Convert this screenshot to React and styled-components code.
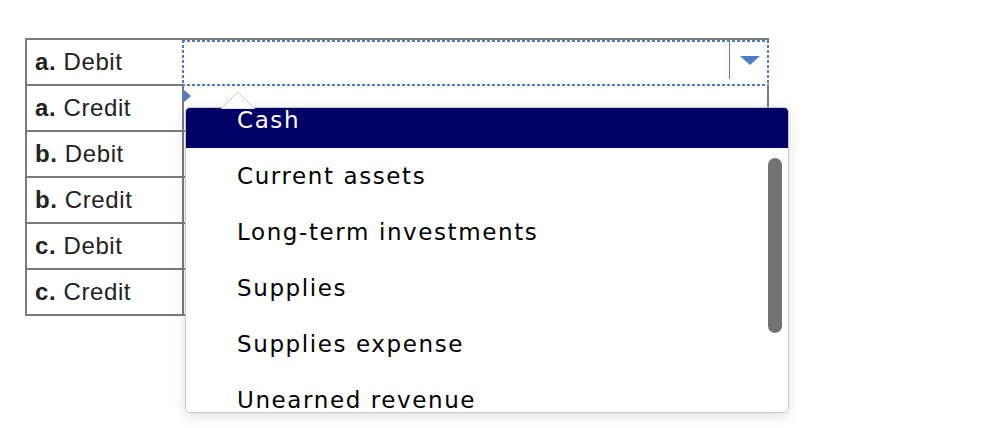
import { useLayoutEffect, useRef } from 'react';
import styled, { createGlobalStyle } from 'styled-components';

const GlobalStyle = createGlobalStyle`
  html, body {
    margin: 0;
    padding: 0;
    background: #fff;
  }
`;

const FOCUS = '#4f7ec4';

const Page = styled.div`
  box-sizing: border-box;
  min-height: 428px;
  padding: 38px 0 0 25px;
`;

const Table = styled.div`
  display: grid;
  grid-template-columns: 155px 583px;
  grid-auto-rows: 44px;
  gap: 2px;
  padding: 2px;
  width: max-content;
  background: #7b7b7b;
`;

const Label = styled.div`
  display: flex;
  align-items: center;
  padding-left: 8px;
  background: #fff;
  font-family: 'Liberation Sans', Arial, sans-serif;
  font-size: 24px;
  letter-spacing: 0.6px;
  color: #222;

  b {
    font-weight: 700;
  }
`;

const Cell = styled.div`
  position: relative;
  background: #fff;
`;

// dotted focus ring drawn as square dashes, like the reference
const Select = styled.div`
  position: relative;
  z-index: 1;
  margin: 0 -2px -2px -2px;
  padding: 2px;
  display: flex;
  justify-content: flex-end;
  background-color: #fff;
  background-image:
    repeating-linear-gradient(to right, ${FOCUS} 0 3px, transparent 3px 5px),
    repeating-linear-gradient(to right, ${FOCUS} 0 3px, transparent 3px 5px),
    repeating-linear-gradient(to bottom, ${FOCUS} 0 3px, transparent 3px 5px),
    repeating-linear-gradient(to bottom, ${FOCUS} 0 3px, transparent 3px 5px);
  background-size: 100% 2px, 100% 2px, 2px 100%, 2px 100%;
  background-position: top left, bottom left, top left, top right;
  background-repeat: no-repeat;
`;

const ArrowBox = styled.div`
  width: 36px;
  margin: 0 2px 5px 0;
  padding-left: 10px;
  box-sizing: border-box;
  border-left: 1px solid ${FOCUS};
  display: flex;
  align-items: center;
`;

const Marker = styled.svg`
  position: absolute;
  left: -1px;
  top: 3px;
`;

const Popup = styled.div`
  position: absolute;
  z-index: 3;
  left: 1px;
  top: 21px;
  width: 604px;
  height: 306px;
  box-sizing: border-box;
  border: 1px solid #c6c6c6;
  border-radius: 5px;
  background: #fff;
  box-shadow: 0 3px 12px rgba(0, 0, 0, 0.13);
`;

const Caret = styled.svg`
  position: absolute;
  left: 34px;
  top: -17px;
`;

const List = styled.ul`
  list-style: none;
  margin: 0;
  padding: 0;
  height: 100%;
  overflow-y: auto;
  scrollbar-width: none;
  border-radius: 4px;
`;

const Option = styled.li`
  height: 56px;
  display: flex;
  align-items: center;
  padding-left: 51px;
  font-family: 'DejaVu Sans', Verdana, sans-serif;
  font-size: 23px;
  line-height: 1;
  letter-spacing: 1.6px;
  white-space: nowrap;
  color: ${({ $active }) => ($active ? '#fff' : '#000')};
  background: ${({ $active }) => ($active ? '#000066' : '#fff')};
`;

const Thumb = styled.div`
  position: absolute;
  right: 6px;
  top: 50px;
  width: 14px;
  height: 175px;
  border-radius: 7px;
  background: #737373;
`;

const ROWS = [
  ['a.', 'Debit'],
  ['a.', 'Credit'],
  ['b.', 'Debit'],
  ['b.', 'Credit'],
  ['c.', 'Debit'],
  ['c.', 'Credit'],
];

const OPTIONS = [
  'Cash',
  'Current assets',
  'Long-term investments',
  'Supplies',
  'Supplies expense',
  'Unearned revenue',
];

function Dropdown() {
  const listRef = useRef(null);

  useLayoutEffect(() => {
    if (listRef.current) listRef.current.scrollTop = 16;
  }, []);

  return (
    <Popup>
      <Caret width="36" height="18" viewBox="0 0 36 18">
        <polygon points="1,18 18,1 35,18" fill="#fff" stroke="#c8c8c8" strokeWidth="1" />
      </Caret>
      <List ref={listRef}>
        {OPTIONS.map((opt, i) => (
          <Option key={opt} $active={i === 0}>
            {opt}
          </Option>
        ))}
      </List>
      <Thumb />
    </Popup>
  );
}

export default function App() {
  return (
    <Page>
      <GlobalStyle />
      <Table>
        {ROWS.map(([letter, side], i) => [
          <Label key={`l${i}`}>
            <b>{letter}</b>&nbsp;{side}
          </Label>,
          i === 0 ? (
            <Select key={`c${i}`}>
              <ArrowBox>
                <svg width="20" height="9" viewBox="0 0 20 9">
                  <polygon points="0,0 20,0 10,9" fill={FOCUS} />
                </svg>
              </ArrowBox>
            </Select>
          ) : (
            <Cell key={`c${i}`}>
              {i === 1 && (
                <>
                  <Marker width="8" height="14" viewBox="0 0 8 14">
                    <polygon points="0,0 8,7 0,14" fill={FOCUS} />
                  </Marker>
                  <Dropdown />
                </>
              )}
            </Cell>
          ),
        ])}
      </Table>
    </Page>
  );
}
